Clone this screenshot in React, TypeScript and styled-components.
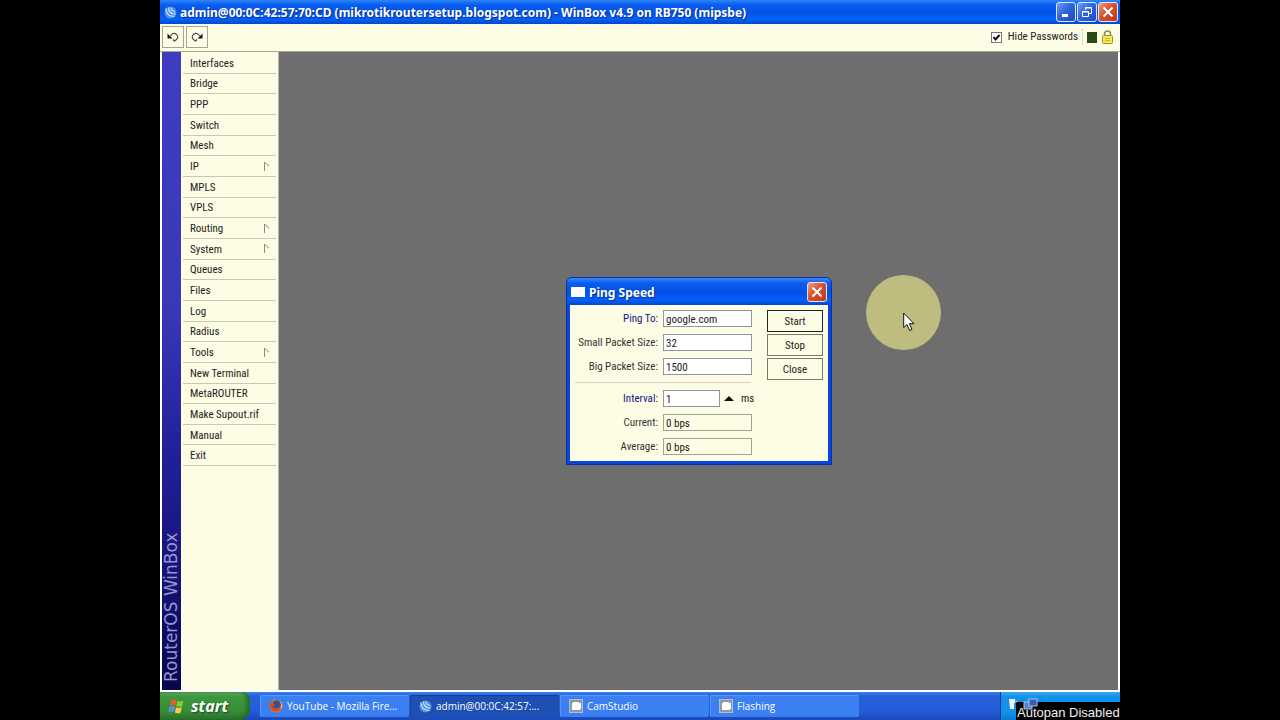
import React from 'react';
import styled, { createGlobalStyle } from 'styled-components';

const GlobalStyle = createGlobalStyle`
  * { box-sizing: border-box; }
  body { margin: 0; background: #000; }
  button, input, output { font: inherit; color: inherit; margin: 0; }
`;

const uiFont = `'Roboto Condensed', 'Liberation Sans', sans-serif`;
const titleFont = `'Noto Sans', sans-serif`;
const cream = '#fdfde6';

const Page = styled.div`
  display: flex;
  justify-content: center;
  min-height: 100vh;
  background: #000;
`;

const Screen = styled.div`
  display: flex;
  flex-direction: column;
  width: 75%;
  background: ${cream};
  font: 11px/16px ${uiFont};
  color: #222;
`;

const TitleBar = styled.header`
  display: flex;
  align-items: center;
  gap: 3px;
  height: 24px;
  padding: 0 2px 0 4px;
  background: linear-gradient(#2c86f8 0, #0a5cf0 5px, #0453e6 12px, #0560fa 19px, #0348cc 24px);
`;

const TitleText = styled.h1`
  flex: 1;
  margin: 0;
  padding-top: 1px;
  font: bold 12px/16px ${titleFont};
  color: #fff;
  text-shadow: 1px 1px 1px #0a2f8a;
  white-space: nowrap;
`;

const WindowButtons = styled.div`
  display: flex;
  gap: 1px;
`;

const CaptionButton = styled.button<{ $close?: boolean }>`
  display: flex;
  align-items: center;
  justify-content: center;
  width: 20px;
  height: 20px;
  padding: 0;
  border: 1px solid #dfe8fb;
  border-radius: 3px;
  background: ${(p) =>
    p.$close
      ? 'linear-gradient(135deg, #ee9c80, #d9512f 45%, #b8391b)'
      : 'linear-gradient(135deg, #6f9cf4, #2f66dd 45%, #1a4bc4)'};
`;

const Toolbar = styled.div`
  display: flex;
  align-items: center;
  gap: 2px;
  height: 28px;
  padding: 0 6px 1px 2px;
  border-bottom: 1px solid #a9a894;
`;

const ToolButton = styled.button`
  display: flex;
  align-items: center;
  justify-content: center;
  width: 22px;
  height: 22px;
  padding: 0;
  border: 1px solid #a5a596;
  background: ${cream};
`;

const PasswordToggle = styled.label`
  display: flex;
  align-items: center;
  gap: 6px;
  margin-left: auto;
  padding-right: 4px;
  border-right: 1px dotted #c4c4b0;
`;

const TickBox = styled.input`
  appearance: none;
  width: 11px;
  height: 11px;
  border: 1px solid #777;
  background: #fff;
`;

const TickWrap = styled.span`
  position: relative;
  display: flex;
  svg { position: absolute; inset: 0; pointer-events: none; }
  input:not(:checked) + svg { display: none; }
`;

const Led = styled.span`
  width: 10px;
  height: 11px;
  margin: 0 2px;
  background: #2b4a17;
`;

const Main = styled.div`
  display: flex;
  flex: 1;
  padding: 0 2px 2px;
  background: #fff;
`;

const Brand = styled.div`
  display: flex;
  width: 19px;
  background: linear-gradient(#3f3cc0 0, #3a38b8 40%, #22209a 62%, #17157c 80%, #06064e);
`;

const BrandText = styled.span`
  width: 19px;
  padding-top: 8px;
  writing-mode: vertical-rl;
  transform: rotate(180deg);
  font: 17px/19px 'DejaVu Sans', sans-serif;
  color: #9896cc;
`;

const Sidebar = styled.nav`
  width: 97px;
  margin-left: 1px;
  padding: 1px 2px 0 1px;
  background: ${cream};
  border-right: 1px solid #b8b8a8;
`;

const Menu = styled.div`
  display: flex;
  flex-direction: column;
  height: 413px;
`;

const MenuItem = styled.button`
  display: flex;
  flex: 1;
  align-items: center;
  justify-content: space-between;
  min-height: 0;
  padding: 2px 6px 0 7px;
  border: 0;
  border-bottom: 1px solid #c9c8b4;
  background: none;
  line-height: 16px;
  text-align: left;
  white-space: nowrap;
`;

const Workspace = styled.main`
  position: relative;
  flex: 1;
  background: #6e6e6e;
`;

const Dialog = styled.section`
  position: absolute;
  left: 287px;
  top: 225px;
  width: 266px;
  padding: 0 3px 3px;
  border: 1px solid #0a2fa8;
  border-radius: 6px 6px 0 0;
  background: #0845d8;
`;

const DialogTitle = styled.div`
  display: flex;
  align-items: center;
  gap: 4px;
  height: 27px;
  margin: 0 -3px;
  padding: 1px 4px 0;
  border-radius: 5px 5px 0 0;
  background: linear-gradient(#3a8cf8 0, #0a5cee 5px, #0450e4 14px, #0560fa 22px, #0348cc 27px);
`;

const DialogIcon = styled.span`
  width: 14px;
  height: 10px;
  background: #fff;
`;

const DialogBody = styled.form`
  display: flex;
  justify-content: space-between;
  padding: 5px 5px 6px;
  background: ${cream};
`;

const Fields = styled.div`
  display: flex;
  flex-direction: column;
  gap: 7px;
  width: 180px;
`;

const FieldRow = styled.div`
  display: grid;
  grid-template-columns: 83px 1fr;
  column-gap: 5px;
  height: 17px;
  align-items: center;
`;

const FieldLabel = styled.label<{ $blue?: boolean }>`
  padding-top: 1px;
  text-align: right;
  white-space: nowrap;
  color: ${(p) => (p.$blue ? '#15157c' : '#333')};
`;

const FieldValue = styled.div`
  display: flex;
  align-items: center;
  white-space: nowrap;
`;

const TextBox = styled.input<{ $short?: boolean }>`
  width: ${(p) => (p.$short ? '57px' : '89px')};
  height: 17px;
  padding: 1px 2px 0;
  border: 1px solid #94949c;
  border-radius: 0;
  background: #fff;
  &:read-only {
    background: ${cream};
    border-color: #a3a392;
  }
`;

const Stepper = styled.button`
  display: flex;
  margin: 0 7px 0 4px;
  padding: 0;
  border: 0;
  background: none;
`;

const Divider = styled.hr`
  width: 176px;
  height: 1px;
  margin: 0;
  border: 0;
  background: #d8d0bc;
`;

const Actions = styled.div`
  display: flex;
  flex-direction: column;
  gap: 2px;
`;

const ActionButton = styled.button<{ $primary?: boolean }>`
  width: 56px;
  height: 22px;
  padding: 1px 0 0;
  border: 1px solid ${(p) => (p.$primary ? '#222' : '#77776a')};
  background: ${cream};
`;

const PointerHalo = styled.div`
  position: absolute;
  left: 587px;
  top: 223px;
  width: 75px;
  height: 75px;
  border-radius: 50%;
  background: #bfbc80;
  svg { position: absolute; left: 37px; top: 37px; }
`;

const Taskbar = styled.footer`
  position: relative;
  display: flex;
  height: 28px;
  font: 10px/16px 'Open Sans', sans-serif;
  color: #fff;
  background: linear-gradient(#3a80f0 0, #2661d8 4px, #245ddb 18px, #1a49b8 28px);
`;

const StartButton = styled.button`
  display: flex;
  align-items: center;
  gap: 5px;
  width: 90px;
  margin-right: 10px;
  padding: 0 0 0 8px;
  border: 0;
  border-radius: 0 8px 10px 0;
  background: linear-gradient(#6bb56b 0, #3c963c 5px, #378f37 18px, #2b732b 28px);
  box-shadow: inset -3px 0 4px #23652a;
  font: italic bold 16px/20px 'Open Sans', sans-serif;
  color: #fff;
  text-shadow: 1px 1px 2px #1c4a1c;
`;

const Task = styled.button<{ $active?: boolean }>`
  display: flex;
  align-items: center;
  gap: 4px;
  width: 149px;
  margin: 3px 1px 3px 0;
  padding: 0 0 0 9px;
  border: 0;
  border-radius: 2px;
  background: ${(p) => (p.$active ? '#1e50b4' : '#3a80f3')};
  box-shadow: inset 1px 1px 1px ${(p) => (p.$active ? '#163f94' : '#5b98fa')};
  white-space: nowrap;
`;

const Tray = styled.div`
  width: 120px;
  margin-left: auto;
  border-left: 1px solid #0b3f9c;
  background: linear-gradient(#35a8f4 0, #1590e8 5px, #1294ec 20px, #0f78d0 28px);
`;

const Toast = styled.div`
  position: absolute;
  right: 0;
  bottom: 0;
  width: 104px;
  height: 18px;
  padding-left: 1px;
  background: #000;
  font: 13px/22px 'Liberation Sans', sans-serif;
  color: #f0f0f0;
  white-space: nowrap;
  svg { position: absolute; left: -8px; top: -5px; }
  span { position: relative; }
`;

const WinBoxLogo = () => (
  <svg width="13" height="13" viewBox="0 0 13 13" aria-hidden="true">
    <circle cx="6.5" cy="6.5" r="6" fill="#4f92de" />
    <path d="M2 2.500c0 5 3 8 8.500 8M4.500 1.500c0 4 2.500 6.500 7 6.500M7 1.500c.3 2.300 1.600 3.700 4 4" fill="none" stroke="#c4e0ff" strokeWidth="1.200" />
  </svg>
);

const CloseMark = () => (
  <svg width="12" height="12" viewBox="0 0 12 12" aria-hidden="true">
    <path d="M1.500 1.500l9 9M10.500 1.500l-9 9" stroke="#fff" strokeWidth="2" />
  </svg>
);

const TurnArrow = ({ flip }: { flip?: boolean }) => (
  <svg width="12" height="10" viewBox="0 0 12 10" aria-hidden="true">
    <g transform={flip ? 'matrix(-1 0 0 1 12 0)' : undefined}>
      <path d="M3.500 4C5 1.300 7 .8 9 2c2.300 1.500 2.300 4.200.5 5.500L7.500 9 6 7.500" fill="none" stroke="#444" strokeWidth="1.100" />
      <path d="M.5 1.500v5h5z" fill="#16162e" />
    </g>
  </svg>
);

const SubmenuMark = () => (
  <svg width="6" height="11" viewBox="0 0 6 11" aria-hidden="true">
    <path d="M.5 9V0L5 4.200" fill="none" stroke="#8a8b7a" />
  </svg>
);

const Padlock = () => (
  <svg width="13" height="14" viewBox="0 0 13 14" aria-hidden="true">
    <path d="M3.500 6V4a3 3 0 016 0v2" fill="none" stroke="#8c8a4c" strokeWidth="1.500" />
    <rect x="1.500" y="5.500" width="10" height="8" rx="1" fill="#f2ea4e" stroke="#9a9434" />
    <path d="M4 8.500h5M4 10.500h5" stroke="#c2b832" />
  </svg>
);

const WindowsFlag = () => (
  <svg width="18" height="17" viewBox="0 0 18 17" aria-hidden="true">
    <path d="M3 2.500c2-1.300 3.700-1.200 5.500-.2L7.300 7.600C5.500 6.700 3.800 6.700 1.800 7.900z" fill="#ea5a2c" />
    <path d="M9.500 2.800c2 1 3.800 1 6-.3l-1.300 5.400c-2 1.200-3.800 1.200-5.800.2z" fill="#8ccb3c" />
    <path d="M1.500 9c2-1.200 3.700-1.200 5.500-.3l-1.200 5.400c-1.800-.9-3.500-.9-5.500.3z" fill="#5590ee" />
    <path d="M8.100 9.200c2 1 3.800 1 5.800-.2l-1.300 5.400c-2 1.200-3.700 1.200-5.700.2z" fill="#f8cf3c" />
  </svg>
);

const Firefox = () => (
  <svg width="14" height="14" viewBox="0 0 14 14" aria-hidden="true">
    <circle cx="7" cy="7" r="6.500" fill="#e8782a" />
    <circle cx="7.500" cy="5.500" r="4.300" fill="#31559c" />
    <path d="M1 2.500c.5 1 1.500 1.300 3 1.500l2 1.500-1.800 1.700c1 2.800 4.800 3 7.800.3C11 12 8 13 6 12.500 2 12 .2 7 1 2.500z" fill="#d9491c" />
    <path d="M10.500 2c2 2 2.300 5 .8 7.500l1.700-1C14 5.500 12.500 3 10.500 2z" fill="#f7bc48" />
  </svg>
);

const CamIcon = () => (
  <svg width="14" height="14" viewBox="0 0 14 14" aria-hidden="true">
    <rect x=".5" y=".5" width="13" height="13" fill="#8f97a8" stroke="#b4bccb" />
    <path d="M3 4h1V3h6v1h2v6h-1v1H3z" fill="#fff" />
  </svg>
);

const TrayIcons = () => (
  <svg width="36" height="16" viewBox="0 0 36 16" aria-hidden="true">
    <path d="M1 2h6v4h-1v6H2z" fill="#f0eff4" />
    <path d="M7 3l3 1-2 2z" fill="#a8aac0" />
    <rect x="16" y="5" width="8" height="7" fill="#4f83c9" stroke="#b6bfe0" />
    <rect x="21" y="2" width="8" height="7" fill="#2f60b8" stroke="#b6bfe0" />
    <path d="M32 5a4 3 0 014 0z" fill="#31506e" />
  </svg>
);

const menu: [string, boolean?][] = [
  ['Interfaces'], ['Bridge'], ['PPP'], ['Switch'], ['Mesh'], ['IP', true], ['MPLS'], ['VPLS'],
  ['Routing', true], ['System', true], ['Queues'], ['Files'], ['Log'], ['Radius'], ['Tools', true],
  ['New Terminal'], ['MetaROUTER'], ['Make Supout.rif'], ['Manual'], ['Exit'],
];

type FieldProps = { id: string; label: string; value: string; blue?: boolean; readOnly?: boolean };

const Field = ({ id, label, value, blue, readOnly }: FieldProps) => (
  <FieldRow>
    <FieldLabel htmlFor={id} $blue={blue}>{label}</FieldLabel>
    <FieldValue>
      <TextBox id={id} defaultValue={value} readOnly={readOnly} />
    </FieldValue>
  </FieldRow>
);

const PingDialog = () => (
  <Dialog role="dialog" aria-label="Ping Speed">
    <DialogTitle>
      <DialogIcon />
      <TitleText as="h2">Ping Speed</TitleText>
      <CaptionButton $close aria-label="Close window"><CloseMark /></CaptionButton>
    </DialogTitle>
    <DialogBody onSubmit={(e) => e.preventDefault()}>
      <Fields>
        <Field id="ping-to" label="Ping To:" value="google.com" blue />
        <Field id="small-size" label="Small Packet Size:" value="32" />
        <Field id="big-size" label="Big Packet Size:" value="1500" />
        <Divider />
        <FieldRow>
          <FieldLabel htmlFor="interval" $blue>Interval:</FieldLabel>
          <FieldValue>
            <TextBox id="interval" $short defaultValue="1" />
            <Stepper type="button" aria-label="Collapse interval">
              <svg width="10" height="6" viewBox="0 0 10 6" aria-hidden="true">
                <path d="M5 0l5 5H0z" fill="#111" />
              </svg>
            </Stepper>
            ms
          </FieldValue>
        </FieldRow>
        <Field id="current" label="Current:" value="0 bps" readOnly />
        <Field id="average" label="Average:" value="0 bps" readOnly />
      </Fields>
      <Actions>
        <ActionButton $primary>Start</ActionButton>
        <ActionButton type="button">Stop</ActionButton>
        <ActionButton type="button">Close</ActionButton>
      </Actions>
    </DialogBody>
  </Dialog>
);

export default function App() {
  return (
    <>
      <GlobalStyle />
      <Page>
        <Screen>
          <TitleBar>
            <WinBoxLogo />
            <TitleText>admin@00:0C:42:57:70:CD (mikrotikroutersetup.blogspot.com) - WinBox v4.9 on RB750 (mipsbe)</TitleText>
            <WindowButtons>
              <CaptionButton aria-label="Minimize">
                <svg width="12" height="12" aria-hidden="true"><path d="M2 9.500h6" stroke="#fff" strokeWidth="3" /></svg>
              </CaptionButton>
              <CaptionButton aria-label="Restore">
                <svg width="12" height="12" aria-hidden="true">
                  <path d="M4.500 4V1.500h6v6H8M4 2h7M1.500 5.500h6v5h-6zM1 6h7" fill="none" stroke="#fff" />
                </svg>
              </CaptionButton>
              <CaptionButton $close aria-label="Close"><CloseMark /></CaptionButton>
            </WindowButtons>
          </TitleBar>
          <Toolbar>
            <ToolButton aria-label="Undo"><TurnArrow /></ToolButton>
            <ToolButton aria-label="Redo"><TurnArrow flip /></ToolButton>
            <PasswordToggle>
              <TickWrap>
                <TickBox type="checkbox" defaultChecked />
                <svg width="11" height="11" aria-hidden="true">
                  <path d="M2.500 5l2 2.500L8.500 3" fill="none" stroke="#111" strokeWidth="2" />
                </svg>
              </TickWrap>
              Hide Passwords
            </PasswordToggle>
            <Led />
            <Padlock />
          </Toolbar>
          <Main>
            <Brand><BrandText>RouterOS WinBox</BrandText></Brand>
            <Sidebar>
              <Menu>
                {menu.map(([name, sub]) => (
                  <MenuItem key={name}>{name}{sub && <SubmenuMark />}</MenuItem>
                ))}
              </Menu>
            </Sidebar>
            <Workspace>
              <PingDialog />
              <PointerHalo>
                <svg width="12" height="20" viewBox="0 0 12 20" aria-hidden="true">
                  <path d="M.7 1v14.500l3.300-3 2.600 6 2.400-1-2.600-5.800H11z" fill="#fff" stroke="#111" />
                </svg>
              </PointerHalo>
            </Workspace>
          </Main>
          <Taskbar>
            <StartButton><WindowsFlag />start</StartButton>
            <Task><Firefox />YouTube - Mozilla Fire...</Task>
            <Task $active><WinBoxLogo />admin@00:0C:42:57:...</Task>
            <Task><CamIcon />CamStudio</Task>
            <Task><CamIcon />Flashing</Task>
            <Tray />
            <Toast><TrayIcons /><span>Autopan Disabled</span></Toast>
          </Taskbar>
        </Screen>
      </Page>
    </>
  );
}
